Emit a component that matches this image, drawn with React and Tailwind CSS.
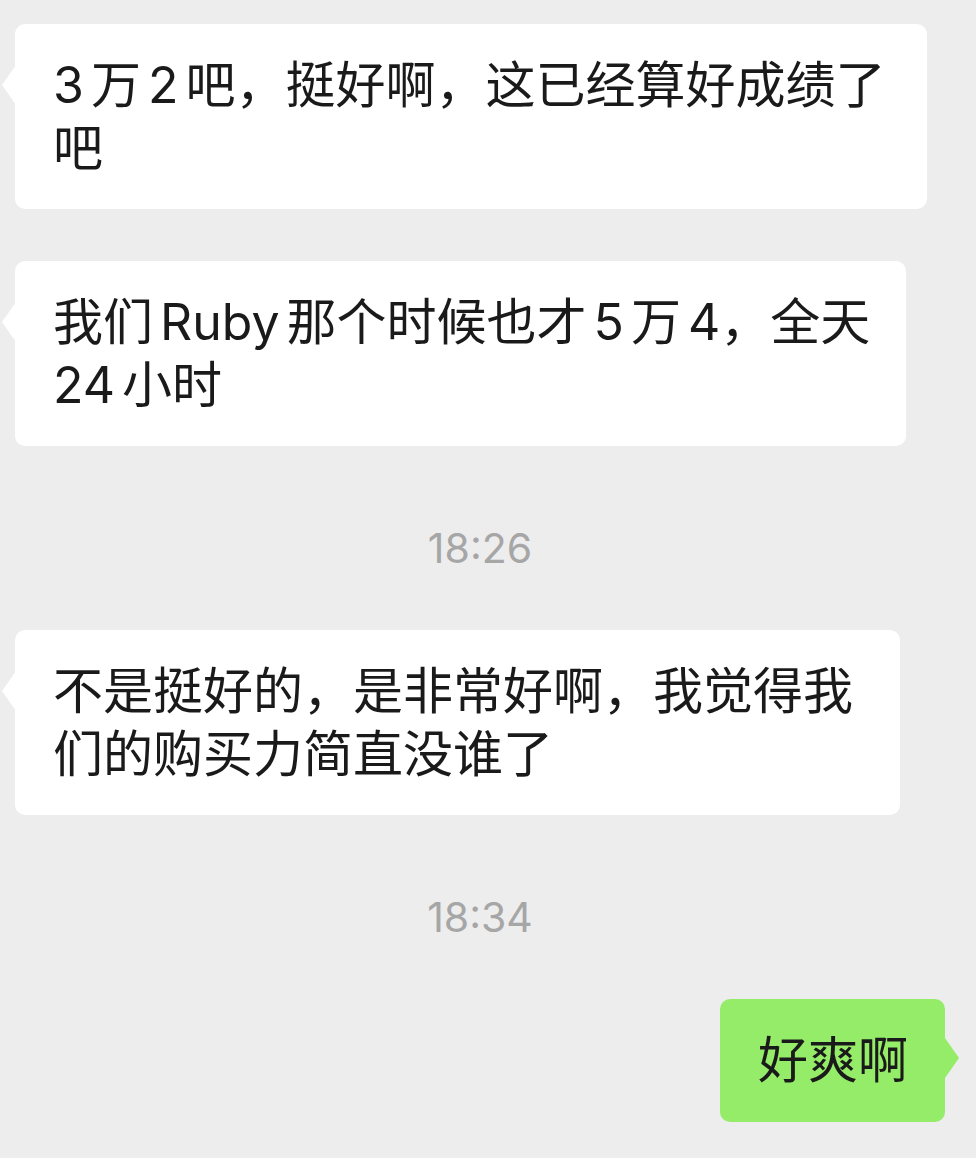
import React from "react";

const FONT = { fontFamily: 'Inter, "Noto Sans CJK SC", sans-serif' };

function G() {
  return <span className="inline-block w-[7px]" />;
}

function LeftBubble({ width, children }) {
  return (
    <div className="relative ml-[15px]" style={{ width }}>
      <div className="absolute left-[-13px] top-[41px] h-0 w-0 border-y-[20px] border-r-[14px] border-y-transparent border-r-white" />
      <div className="rounded-[10px] bg-white py-[30px] pl-[38px] text-[50px] leading-[62.5px] text-[#1a1a1a] whitespace-nowrap">
        {children}
      </div>
    </div>
  );
}

function Time({ children }) {
  return (
    <div className="mt-[78px] mb-[56px] flex h-[50px] items-center justify-center pr-[16px] text-[41px] text-[#a6a6a6]">
      {children}
    </div>
  );
}

export default function App() {
  return (
    <div className="min-h-[1158px] w-[976px] bg-[#ededed] pt-[24px]" style={FONT}>
      <LeftBubble width={912}>
        3<G />万<G />2<G />吧，挺好啊，这已经算好成绩了
        <br />吧
      </LeftBubble>

      <div className="h-[52px]" />

      <LeftBubble width={891}>
        我们<G />Ruby<G />那个时候也才<G />5<G />万<G />4，全天
        <br />24<G />小时
      </LeftBubble>

      <Time>18:26</Time>

      <LeftBubble width={885}>
        不是挺好的，是非常好啊，我觉得我
        <br />们的购买力简直没谁了
      </LeftBubble>

      <Time>18:34</Time>

      <div className="flex justify-end pr-[31px]">
        <div className="relative w-[225px]">
          <div className="absolute right-[-14px] top-[39px] h-0 w-0 border-y-[20px] border-l-[14px] border-y-transparent border-l-[#95ec69]" />
          <div className="rounded-[10px] bg-[#95ec69] py-[30px] pl-[38px] text-[50px] leading-[62.5px] text-[#1a1a1a] whitespace-nowrap">
            好爽啊
          </div>
        </div>
      </div>
    </div>
  );
}
